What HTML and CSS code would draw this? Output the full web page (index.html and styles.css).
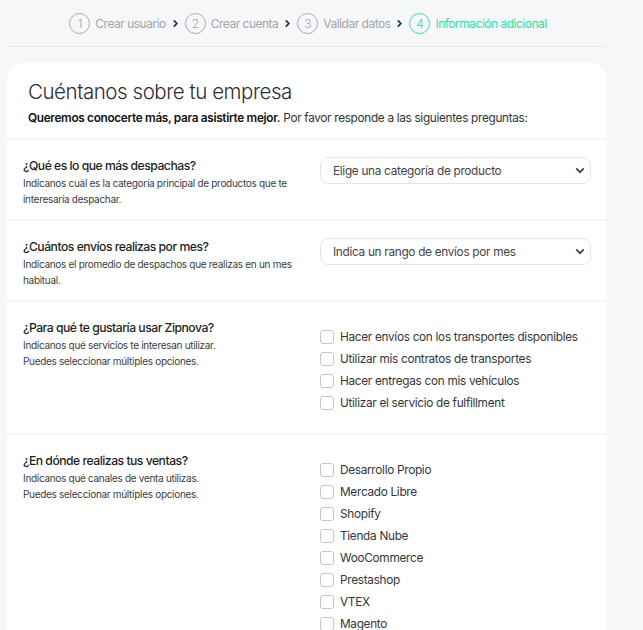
FILE: index.html
```html
<!DOCTYPE html>
<html lang="es">
<head>
<meta charset="utf-8">
<title>Información adicional</title>
<link rel="stylesheet" href="styles.css">
</head>
<body>
<div class="page">
  <nav class="stepper">
    <div class="step"><span class="num">1</span><span class="label">Crear usuario</span></div>
    <svg class="chev" viewBox="0 0 8 10" width="7" height="9"><path d="M2 1.5 L5.5 5 L2 8.5" fill="none" stroke="#1e3350" stroke-width="2"/></svg>
    <div class="step"><span class="num">2</span><span class="label">Crear cuenta</span></div>
    <svg class="chev" viewBox="0 0 8 10" width="7" height="9"><path d="M2 1.5 L5.5 5 L2 8.5" fill="none" stroke="#1e3350" stroke-width="2"/></svg>
    <div class="step"><span class="num">3</span><span class="label">Validar datos</span></div>
    <svg class="chev" viewBox="0 0 8 10" width="7" height="9"><path d="M2 1.5 L5.5 5 L2 8.5" fill="none" stroke="#1e3350" stroke-width="2"/></svg>
    <div class="step active"><span class="num">4</span><span class="label">Información adicional</span></div>
  </nav>
  <div class="rule"></div>

  <main class="card">
    <header class="card-head">
      <h1 class="title">Cuéntanos sobre tu empresa</h1>
      <p class="lead"><strong>Queremos conocerte más, para asistirte mejor.</strong> Por favor responde a las siguientes preguntas:</p>
    </header>

    <section class="row">
      <div class="q">
        <h2 class="q-title">¿Qué es lo que más despachas?</h2>
        <p class="q-desc">Indícanos cuál es la categoría principal de productos que te interesaría despachar.</p>
      </div>
      <div class="field">
        <div class="select-wrap">
          <select class="select"><option>Elige una categoría de producto</option></select>
          <svg class="select-arrow" viewBox="0 0 12 8" width="10" height="7"><path d="M1.5 1.5 L6 6 L10.5 1.5" fill="none" stroke="#444" stroke-width="2.2"/></svg>
        </div>
      </div>
    </section>

    <section class="row">
      <div class="q">
        <h2 class="q-title">¿Cuántos envíos realizas por mes?</h2>
        <p class="q-desc">Indícanos el promedio de despachos que realizas en un mes habitual.</p>
      </div>
      <div class="field">
        <div class="select-wrap">
          <select class="select"><option>Indica un rango de envíos por mes</option></select>
          <svg class="select-arrow" viewBox="0 0 12 8" width="10" height="7"><path d="M1.5 1.5 L6 6 L10.5 1.5" fill="none" stroke="#444" stroke-width="2.2"/></svg>
        </div>
      </div>
    </section>

    <section class="row">
      <div class="q">
        <h2 class="q-title">¿Para qué te gustaría usar Zipnova?</h2>
        <p class="q-desc">Indícanos qué servicios te interesan utilizar.<br>Puedes seleccionar múltiples opciones.</p>
      </div>
      <div class="field checks">
        <label class="check"><span class="box"></span>Hacer envíos con los transportes disponibles</label>
        <label class="check"><span class="box"></span>Utilizar mis contratos de transportes</label>
        <label class="check"><span class="box"></span>Hacer entregas con mis vehículos</label>
        <label class="check"><span class="box"></span>Utilizar el servicio de fulfillment</label>
      </div>
    </section>

    <section class="row">
      <div class="q">
        <h2 class="q-title">¿En dónde realizas tus ventas?</h2>
        <p class="q-desc">Indícanos qué canales de venta utilizas.<br>Puedes seleccionar múltiples opciones.</p>
      </div>
      <div class="field checks">
        <label class="check"><span class="box"></span>Desarrollo Propio</label>
        <label class="check"><span class="box"></span>Mercado Libre</label>
        <label class="check"><span class="box"></span>Shopify</label>
        <label class="check"><span class="box"></span>Tienda Nube</label>
        <label class="check"><span class="box"></span>WooCommerce</label>
        <label class="check"><span class="box"></span>Prestashop</label>
        <label class="check"><span class="box"></span>VTEX</label>
        <label class="check"><span class="box"></span>Magento</label>
      </div>
    </section>
  </main>
</div>
</body>
</html>
```
FILE: styles.css
```css
* { box-sizing: border-box; }
html, body { margin: 0; padding: 0; }
body {
  background: #f6f7f9;
  font-family: Inter, "Noto Sans", sans-serif;
  color: #222;
  letter-spacing: -0.3px;
}
.page {
  width: 600px;
  margin-left: 7px;
  padding-top: 13px;
}
.stepper {
  display: flex;
  align-items: center;
  justify-content: center;
  gap: 6px;
  height: 20px;
  padding-left: 2px;
}
.step {
  display: flex;
  align-items: center;
  gap: 5px;
  color: #a3a5a8;
  font-size: 12px;
}
.num {
  width: 21px;
  height: 21px;
  border: 1px solid #a8aaad;
  border-radius: 50%;
  display: flex;
  align-items: center;
  justify-content: center;
  font-size: 12px;
  font-weight: 300;
}
.label { font-weight: 400; letter-spacing: -0.5px; }
.chev { display: block; }
.step.active { color: #1fe5a4; }
.step.active .num { border-color: #2ae6a8; }
.rule {
  height: 1px;
  background: #e8e9ec;
  margin-top: 13px;
}
.card {
  margin-top: 16px;
  background: #fff;
  border-radius: 16px 16px 0 0;
  overflow: hidden;
}
.card-head {
  padding: 16px 20px 12px 21px;
}
.title {
  margin: 0;
  font-size: 20.5px;
  font-weight: 300;
  line-height: 26px;
  color: #2a2d33;
  letter-spacing: -0.45px;
}
.lead {
  margin: 5px 0 0;
  font-size: 11.8px;
  line-height: 16px;
  color: #333;
  letter-spacing: -0.32px;
}
.lead strong { font-weight: 600; color: #111; }
.row {
  display: grid;
  grid-template-columns: 1fr 271px;
  column-gap: 20px;
  padding: 17px 16px 12px;
  border-top: 2px solid #f5f6f8;
}
.q-title {
  margin: 0;
  font-size: 12.2px;
  font-weight: 500;
  line-height: 18px;
  color: #1d1f23;
  letter-spacing: -0.5px;
}
.q-desc {
  margin: 0;
  font-size: 10px;
  line-height: 16px;
  color: #3a3d42;
  letter-spacing: -0.3px;
}
.select-wrap { position: relative; }
.select {
  display: block;
  width: 100%;
  height: 27px;
  appearance: none;
  -webkit-appearance: none;
  border: 1px solid #e4e5e8;
  border-radius: 8px;
  background: #fff;
  padding: 0 24px 0 12px;
  font-family: Inter, "Noto Sans", sans-serif;
  font-size: 11.8px;
  color: #444;
  letter-spacing: -0.3px;
}
.select-arrow {
  position: absolute;
  right: 6px;
  top: 10px;
  pointer-events: none;
}
.checks {
  display: flex;
  flex-direction: column;
  padding-top: 7px;
  padding-bottom: 7px;
}
.check {
  display: flex;
  align-items: center;
  gap: 6px;
  height: 22px;
  font-size: 11.8px;
  color: #33363b;
  letter-spacing: -0.3px;
}
.box {
  width: 14px;
  height: 14px;
  border: 1px solid #c4c6ca;
  border-radius: 3px;
  background: #fff;
  flex: none;
}
```
